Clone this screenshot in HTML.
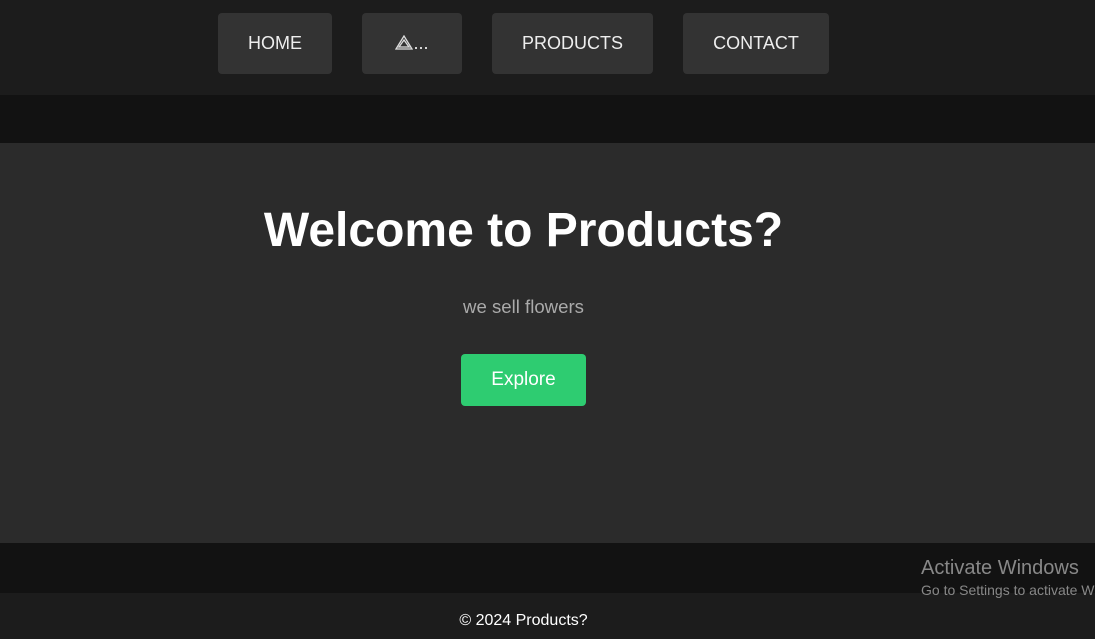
<!DOCTYPE html>
<html><head><style>
html,body{margin:0;width:1095px;height:639px;overflow:hidden}
body{background:#121212;font-family:"Liberation Sans",sans-serif;position:relative}
.nav{position:absolute;top:0;left:0;width:1095px;height:95px;background:#1c1c1c}
.b{position:absolute;top:13px;height:61px;background:#333;border-radius:4px;color:#eee;font-size:18px;line-height:61px;text-align:center}
.hero{position:absolute;top:143px;left:0;width:1095px;height:400px;background:#2b2b2b;text-align:center}
h1{position:absolute;top:60px;left:0;width:1047px;margin:0;color:#fff;font-size:48px;font-weight:bold;line-height:56px;text-align:center}
.p{position:absolute;top:153px;left:0;width:1047px;color:#aaa;font-size:18.6px;text-align:center}
.e{position:absolute;top:211px;left:461px;width:125px;height:52px;background:#2ecc71;border-radius:4px;color:#fff;font-size:19px;line-height:52px}
.f{position:absolute;top:593px;left:0;width:1095px;height:46px;background:#1c1c1c;color:#fff;font-size:16px;text-align:center;line-height:56px}
.f span{position:relative;left:-24px}
.w{position:absolute;left:921px;top:557px;color:#888;font-size:20px;white-space:nowrap}
.w div{font-size:14px;margin-top:2px}
</style></head><body>
<div class="nav">
<div class="b" style="left:218px;width:114px">HOME</div>
<div class="b" style="left:362px;width:100px"><svg width="18" height="15" viewBox="0 0 18 15" style="vertical-align:-1px"><path d="M9 1L1 14H17Z M9 5L4 12H14Z" fill="none" stroke="#ddd" stroke-width="1.3"/></svg>...</div>
<div class="b" style="left:492px;width:161px">PRODUCTS</div>
<div class="b" style="left:683px;width:146px">CONTACT</div>
</div>
<div class="hero">
<h1>Welcome to Products?</h1>
<div class="p">we sell flowers</div>
<div class="e">Explore</div>
</div>
<div class="f"><span>© 2024 Products?</span></div>
<div class="w">Activate Windows<div>Go to Settings to activate Windows.</div></div>
</body></html>
